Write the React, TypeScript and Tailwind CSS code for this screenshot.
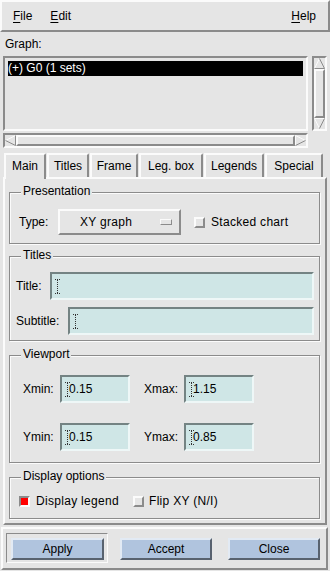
import React from "react";

const raised =
  "border-2 border-t-[#fbfbfb] border-l-[#fbfbfb] border-r-[#8b8b8b] border-b-[#8b8b8b]";
const sunken =
  "border-2 border-t-[#8b8b8b] border-l-[#8b8b8b] border-r-[#fbfbfb] border-b-[#fbfbfb]";
const field =
  "border-2 border-t-[#748383] border-l-[#748383] border-r-[#eef7f7] border-b-[#eef7f7] bg-[#cfe6e6] flex items-center pl-[3px]";
const blueBtn =
  "border-2 border-t-[#e2eaf4] border-l-[#e2eaf4] border-r-[#58626f] border-b-[#58626f] bg-[#b0c4de] flex items-center justify-center";

function Arrow({ dir }: { dir: "up" | "down" | "left" | "right" }) {
  const L = "#fbfbfb";
  const D = "#8b8b8b";
  return (
    <svg width="11" height="11" viewBox="0 0 11 11" className="shrink-0">
      {dir === "up" && (
        <>
          <polygon points="5.5,1 0.5,10.5 10.5,10.5" fill="#e5e5e5" />
          <line x1="0.5" y1="10.5" x2="5.5" y2="0.5" stroke={L} />
          <line x1="5.5" y1="0.5" x2="10.5" y2="10.5" stroke={D} />
          <line x1="0.5" y1="10.5" x2="10.5" y2="10.5" stroke={D} />
        </>
      )}
      {dir === "down" && (
        <>
          <polygon points="0.5,0.5 10.5,0.5 5.5,10" fill="#e5e5e5" />
          <line x1="0.5" y1="0.5" x2="10.5" y2="0.5" stroke={L} />
          <line x1="0.5" y1="0.5" x2="5.5" y2="10.5" stroke={L} />
          <line x1="10.5" y1="0.5" x2="5.5" y2="10.5" stroke={D} />
        </>
      )}
      {dir === "left" && (
        <>
          <polygon points="0.5,5.5 10.5,0.5 10.5,10.5" fill="#e5e5e5" />
          <line x1="0.5" y1="5.5" x2="10.5" y2="0.5" stroke={L} />
          <line x1="0.5" y1="5.5" x2="10.5" y2="10.5" stroke={D} />
          <line x1="10.5" y1="0.5" x2="10.5" y2="10.5" stroke={D} />
        </>
      )}
      {dir === "right" && (
        <>
          <polygon points="10.5,5.5 0.5,0.5 0.5,10.5" fill="#e5e5e5" />
          <line x1="0.5" y1="0.5" x2="0.5" y2="10.5" stroke={L} />
          <line x1="0.5" y1="0.5" x2="10.5" y2="5.5" stroke={L} />
          <line x1="0.5" y1="10.5" x2="10.5" y2="5.5" stroke={D} />
        </>
      )}
    </svg>
  );
}

function Cursor() {
  return (
    <svg width="5" height="15" viewBox="0 0 5 15" className="shrink-0">
      <line x1="0" y1="0.5" x2="5" y2="0.5" stroke="#333" strokeDasharray="1 1" />
      <line x1="2.5" y1="1" x2="2.5" y2="14" stroke="#333" strokeDasharray="1 1" />
      <line x1="0" y1="14.5" x2="5" y2="14.5" stroke="#333" strokeDasharray="1 1" />
    </svg>
  );
}

function Field({ value, className }: { value?: string; className: string }) {
  return (
    <div className={field + " " + className}>
      <Cursor />
      {value && <span className="-ml-[1px] leading-[14px]">{value}</span>}
    </div>
  );
}

function Frame({
  title,
  className,
  children,
}: {
  title: string;
  className: string;
  children: React.ReactNode;
}) {
  return (
    <div
      className={
        "relative w-[311px] border border-[#8b8b8b] shadow-[inset_1px_1px_0_#fbfbfb,1px_1px_0_#fbfbfb] " +
        className
      }
    >
      <span className="absolute top-[-9px] left-[11px] px-[2px] bg-[#e5e5e5] leading-[14px]">
        {title}
      </span>
      {children}
    </div>
  );
}

function Check({ on }: { on?: boolean }) {
  return on ? (
    <div className="w-[11px] h-[11px] shrink-0 border-2 border-t-[#8b8b8b] border-l-[#8b8b8b] border-r-[#fbfbfb] border-b-[#fbfbfb] bg-[#ff0000]" />
  ) : (
    <div className={"w-[11px] h-[11px] shrink-0 bg-[#e5e5e5] " + raised} />
  );
}

const tabs = [
  { label: "Main", w: "w-[42px]" },
  { label: "Titles", w: "w-[42px]" },
  { label: "Frame", w: "w-[48px]" },
  { label: "Leg. box", w: "w-[64px]" },
  { label: "Legends", w: "w-[60px]" },
  { label: "Special", w: "w-[58px]" },
];

export default function App() {
  return (
    <div className="w-[330px] h-[571px] overflow-hidden bg-[#e5e5e5] text-black text-[12px] font-['Liberation_Sans',Arial,sans-serif] flex flex-col">
      {/* menu bar */}
      <div className={"h-[32px] shrink-0 flex items-center pl-[11px] pr-[12px] leading-[14px] " + raised}>
        <span>
          <span className="underline underline-offset-[2px]">F</span>ile
        </span>
        <span className="ml-[18px]">
          <span className="underline underline-offset-[2px]">E</span>dit
        </span>
        <span className="ml-auto">
          <span className="underline underline-offset-[2px]">H</span>elp
        </span>
      </div>

      <div className="h-[24px] shrink-0 pt-[5px] pl-[5px] leading-[14px]">Graph:</div>

      {/* graph list */}
      <div className="flex h-[75px] shrink-0">
        <div className={"ml-[3px] w-[305px] pt-[3px] px-[3px] " + sunken}>
          <div className="h-[15px] bg-black text-white leading-[15px]">(+) G0 (1 sets)</div>
        </div>
        <div className={"ml-[4px] w-[15px] flex flex-col " + sunken}>
          <Arrow dir="up" />
          <div className={"flex-1 bg-[#e5e5e5] " + raised} />
          <Arrow dir="down" />
        </div>
      </div>
      <div className={"mt-[2px] ml-[3px] w-[305px] h-[15px] shrink-0 flex " + sunken}>
        <Arrow dir="left" />
        <div className={"flex-1 bg-[#e5e5e5] " + raised} />
        <Arrow dir="right" />
      </div>

      {/* tabs */}
      <div className="mt-[5px] ml-[4px] h-[24px] shrink-0 flex items-end gap-[1px]">
        {tabs.map((t, i) => (
          <div
            key={t.label}
            className={
              "flex items-center justify-center leading-[14px] bg-[#e5e5e5] border-t-2 border-l-2 border-r-2 border-t-[#fbfbfb] border-l-[#fbfbfb] border-r-[#8b8b8b] rounded-tr-[2px] " +
              t.w +
              (i === 0 ? " relative z-10 h-[26px] -mb-[2px] pb-[2px]" : " h-[24px]")
            }
          >
            {t.label}
          </div>
        ))}
      </div>

      {/* tab panel */}
      <div className={"ml-[3px] w-[324px] h-[348px] shrink-0 pl-[4px] " + raised}>
        <Frame title="Presentation" className="mt-[13px] h-[52px] pt-[16px] pl-[9px] flex items-start">
          <span className="w-[39px] h-[26px] flex items-center leading-[14px]">Type:</span>
          <div className={"w-[123px] h-[26px] flex items-center pl-[20px] pr-[7px] " + raised}>
            <span className="leading-[14px] tracking-[0.3px]">XY graph</span>
            <div className="ml-auto w-[12px] h-[6px] border-[1px] border-t-[#fbfbfb] border-l-[#fbfbfb] border-r-[#8b8b8b] border-b-[#8b8b8b]" />
          </div>
          <div className="ml-[13px] h-[26px] flex items-center">
            <Check />
            <span className="ml-[6px] leading-[14px] tracking-[0.3px]">Stacked chart</span>
          </div>
        </Frame>

        <Frame title="Titles" className="mt-[12px] h-[85px] pt-[15px] pl-[6px] pr-[5px] flex flex-col gap-[7px]">
          <div className="flex h-[28px] items-center">
            <span className="w-[34px] leading-[14px]">Title:</span>
            <Field className="flex-1 h-[28px]" />
          </div>
          <div className="flex h-[28px] items-center">
            <span className="w-[52px] leading-[14px]">Subtitle:</span>
            <Field className="flex-1 h-[28px]" />
          </div>
        </Frame>

        <Frame title="Viewport" className="mt-[14px] h-[108px] pt-[19px] pl-[13px] flex flex-col gap-[20px]">
          <div className="flex h-[28px] items-center">
            <span className="w-[37px] leading-[14px]">Xmin:</span>
            <Field value="0.15" className="w-[70px] h-[28px]" />
            <span className="ml-[14px] w-[40px] leading-[14px]">Xmax:</span>
            <Field value="1.15" className="w-[70px] h-[28px]" />
          </div>
          <div className="flex h-[28px] items-center">
            <span className="w-[37px] leading-[14px]">Ymin:</span>
            <Field value="0.15" className="w-[70px] h-[28px]" />
            <span className="ml-[14px] w-[40px] leading-[14px]">Ymax:</span>
            <Field value="0.85" className="w-[70px] h-[28px]" />
          </div>
        </Frame>

        <Frame title="Display options" className="mt-[14px] h-[42px] pt-[16px] pl-[9px]">
          <div className="flex h-[14px] items-center leading-[14px]">
            <Check on />
            <span className="ml-[6px] w-[83px] tracking-[0.3px]">Display legend</span>
            <div className="ml-[14px]">
              <Check />
            </div>
            <span className="ml-[5px] tracking-[0.3px]">Flip XY (N/I)</span>
          </div>
        </Frame>
      </div>

      {/* action area */}
      <div className={"mt-[2px] ml-[1px] w-[327px] h-[43px] shrink-0 flex items-start pt-[4px] pl-[3px] " + raised}>
        <div className="w-[102px] h-[30px] border border-t-[#8b8b8b] border-l-[#8b8b8b] border-r-[#fbfbfb] border-b-[#fbfbfb] pl-[4px] pt-[4px]">
          <div className={"w-[93px] h-[22px] leading-[14px] " + blueBtn}>Apply</div>
        </div>
        <div className={"ml-[12px] mt-[5px] w-[92px] h-[22px] leading-[14px] " + blueBtn}>Accept</div>
        <div className={"ml-[16px] mt-[5px] w-[92px] h-[22px] leading-[14px] " + blueBtn}>Close</div>
      </div>
    </div>
  );
}
